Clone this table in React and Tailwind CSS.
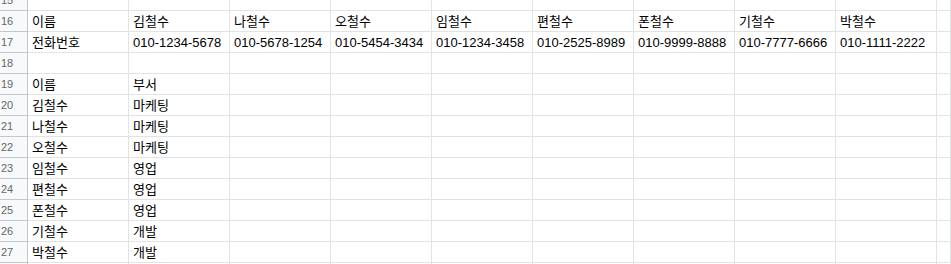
import React from 'react';

const names = ['김철수', '나철수', '오철수', '임철수', '편철수', '폰철수', '기철수', '박철수'];
const phones = [
  '010-1234-5678',
  '010-5678-1254',
  '010-5454-3434',
  '010-1234-3458',
  '010-2525-8989',
  '010-9999-8888',
  '010-7777-6666',
  '010-1111-2222',
];
const depts = ['마케팅', '마케팅', '마케팅', '영업', '영업', '영업', '개발', '개발'];

const rows = [
  { n: 15, cells: [] },
  { n: 16, cells: ['이름', ...names] },
  { n: 17, cells: ['전화번호', ...phones] },
  { n: 18, cells: [] },
  { n: 19, cells: ['이름', '부서'] },
  ...names.map((name, i) => ({ n: 20 + i, cells: [name, depts[i]] })),
  { n: 28, cells: [] },
];

export default function App() {
  return (
    <div
      className="w-[951px] h-[264px] overflow-hidden bg-white text-black"
      style={{ fontFamily: '"Liberation Sans", Arial, "Noto Sans CJK KR", sans-serif' }}
    >
      <div className="-mt-[10px]">
        {rows.map(row => (
          <div key={row.n} className="grid grid-cols-[28px_repeat(9,101px)_1fr] h-[21px]">
            <div className="bg-[#f8f9fa] border-r border-b border-[#c4c7c5] text-[11px] text-[#666] pl-[1px] flex items-center leading-none">
              {row.n}
            </div>
            {Array.from({ length: 10 }).map((_, i) => (
              <div
                key={i}
                className="border-r border-b border-[#e2e3e3] text-[13px] pl-[4px] flex items-center whitespace-nowrap overflow-visible leading-none"
              >
                {row.cells[i] || ''}
              </div>
            ))}
          </div>
        ))}
      </div>
    </div>
  );
}
